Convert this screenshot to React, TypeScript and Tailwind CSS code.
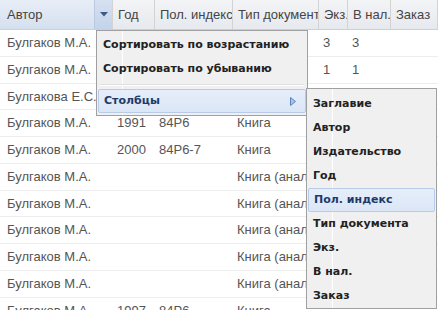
import React from "react";

const cols = [113, 42, 78, 86, 29, 43, 47];
const headers = ["Автор", "Год", "Пол. индекс", "Тип документ", "Экз.", "В нал.", "Заказ"];

const rows: string[][] = [
  ["Булгаков М.А.", "", "", "", "3", "3", ""],
  ["Булгаков М.А.", "", "", "", "1", "1", ""],
  ["Булгакова Е.С.", "", "", "", "", "", ""],
  ["Булгаков М.А.", "1991", "84Р6", "Книга", "", "", ""],
  ["Булгаков М.А.", "2000", "84Р6-7", "Книга", "", "", ""],
  ["Булгаков М.А.", "", "", "Книга (аналитика)", "", "", ""],
  ["Булгаков М.А.", "", "", "Книга (аналитика)", "", "", ""],
  ["Булгаков М.А.", "", "", "Книга (аналитика)", "", "", ""],
  ["Булгаков М.А.", "", "", "Книга (аналитика)", "", "", ""],
  ["Булгаков М.А.", "", "", "Книга (аналитика)", "", "", ""],
  ["Булгаков М.А.", "1997", "84Р6", "Книга", "", "", ""],
];

const sub = ["Заглавие", "Автор", "Издательство", "Год", "Пол. индекс", "Тип документа", "Экз.", "В нал.", "Заказ"];

export default function App() {
  return (
    <div
      className="relative w-[438px] h-[310px] overflow-hidden bg-white"
      style={{ fontFamily: '"Liberation Sans", Arial, sans-serif' }}
    >
      {/* header */}
      <div className="flex h-[30px] border-b border-[#d0d0d0] bg-gradient-to-b from-[#f3f4f6] to-[#e6e9ee]">
        {headers.map((h, i) => (
          <div
            key={h}
            style={{ width: cols[i] }}
            className={
              "relative flex items-center shrink-0 overflow-hidden whitespace-nowrap text-[13px] text-[#444] border-r border-[#d3d3d3] pl-[5px] " +
              (i === 0 ? "bg-gradient-to-b from-[#e8eef7] to-[#d5e0ef] pl-[7px]" : "")
            }
          >
            {h}
            {i === 0 && (
              <div className="absolute right-0 top-0 h-full w-[18px] bg-gradient-to-b from-[#d6e1f1] to-[#c3d3ea] border-l border-[#b9c9e0] flex items-center justify-center">
                <svg width="8" height="5" viewBox="0 0 8 5">
                  <path d="M0 0 H8 L4 4.5 Z" fill="#3d5a85" />
                </svg>
              </div>
            )}
          </div>
        ))}
      </div>

      {/* body */}
      <div className="flex flex-col">
        {rows.map((r, ri) => (
          <div key={ri} className="flex h-[26.75px] border-b border-[#ededed] shrink-0">
            {r.map((c, ci) => (
              <div
                key={ci}
                style={{ width: cols[ci] }}
                className={
                  "flex items-center shrink-0 overflow-hidden whitespace-nowrap text-[13px] text-[#555] " +
                  (ci === 0 ? "pl-[7px]" : "pl-[4px]")
                }
              >
                {c}
              </div>
            ))}
          </div>
        ))}
      </div>

      {/* main menu */}
      <div
        className="absolute left-[96px] top-[30px] w-[212px] h-[86px] bg-[#f0f0f0] border border-[#a0a0a0] pt-[2px] text-[11px] font-bold text-[#222]"
        style={{ fontFamily: 'Tahoma, "DejaVu Sans", "Liberation Sans", sans-serif' }}
      >
        <div className="absolute left-[25px] top-0 bottom-0 w-px bg-[#e2e2e2] border-r border-white" />
        <div className="relative h-[24px] flex items-center pl-[6px]">Сортировать по возрастанию</div>
        <div className="relative h-[24px] flex items-center pl-[6px]">Сортировать по убыванию</div>
        <div className="relative h-[8px] flex items-center px-[3px]">
          <div className="w-full h-[2px] border-t border-[#e0e0e0] border-b border-b-white" />
        </div>
        <div className="relative mx-[1px] h-[24px] flex items-center pl-[5px] text-[#1e3a6a] bg-gradient-to-b from-[#e6eefa] to-[#dbe6f6] border border-[#b8cbe8] rounded-[2px]">
          Столбцы
          <svg className="absolute right-[9px] top-[7px]" width="6" height="9" viewBox="0 0 6 9">
            <path d="M0.5 0.5 L5.5 4.5 L0.5 8.5 Z" fill="#a9c2ea" stroke="#5f84c2" strokeWidth="1" />
          </svg>
        </div>
      </div>

      {/* submenu */}
      <div
        className="absolute left-[306px] top-[88px] w-[131px] h-[221px] bg-[#f0f0f0] border border-[#a0a0a0] pt-[3px] text-[11px] font-bold text-[#222]"
        style={{ fontFamily: 'Tahoma, "DejaVu Sans", "Liberation Sans", sans-serif' }}
      >
        <div className="absolute left-[25px] top-0 bottom-0 w-px bg-[#e2e2e2] border-r border-white" />
        {sub.map((s) => (
          <div
            key={s}
            className={
              "relative h-[24px] flex items-center " +
              (s === "Пол. индекс"
                ? "mx-[1px] pl-[5px] text-[#1e3a6a] bg-gradient-to-b from-[#e6eefa] to-[#dbe6f6] border border-[#b8cbe8] rounded-[2px]"
                : "pl-[6px]")
            }
          >
            {s}
          </div>
        ))}
      </div>
    </div>
  );
}
